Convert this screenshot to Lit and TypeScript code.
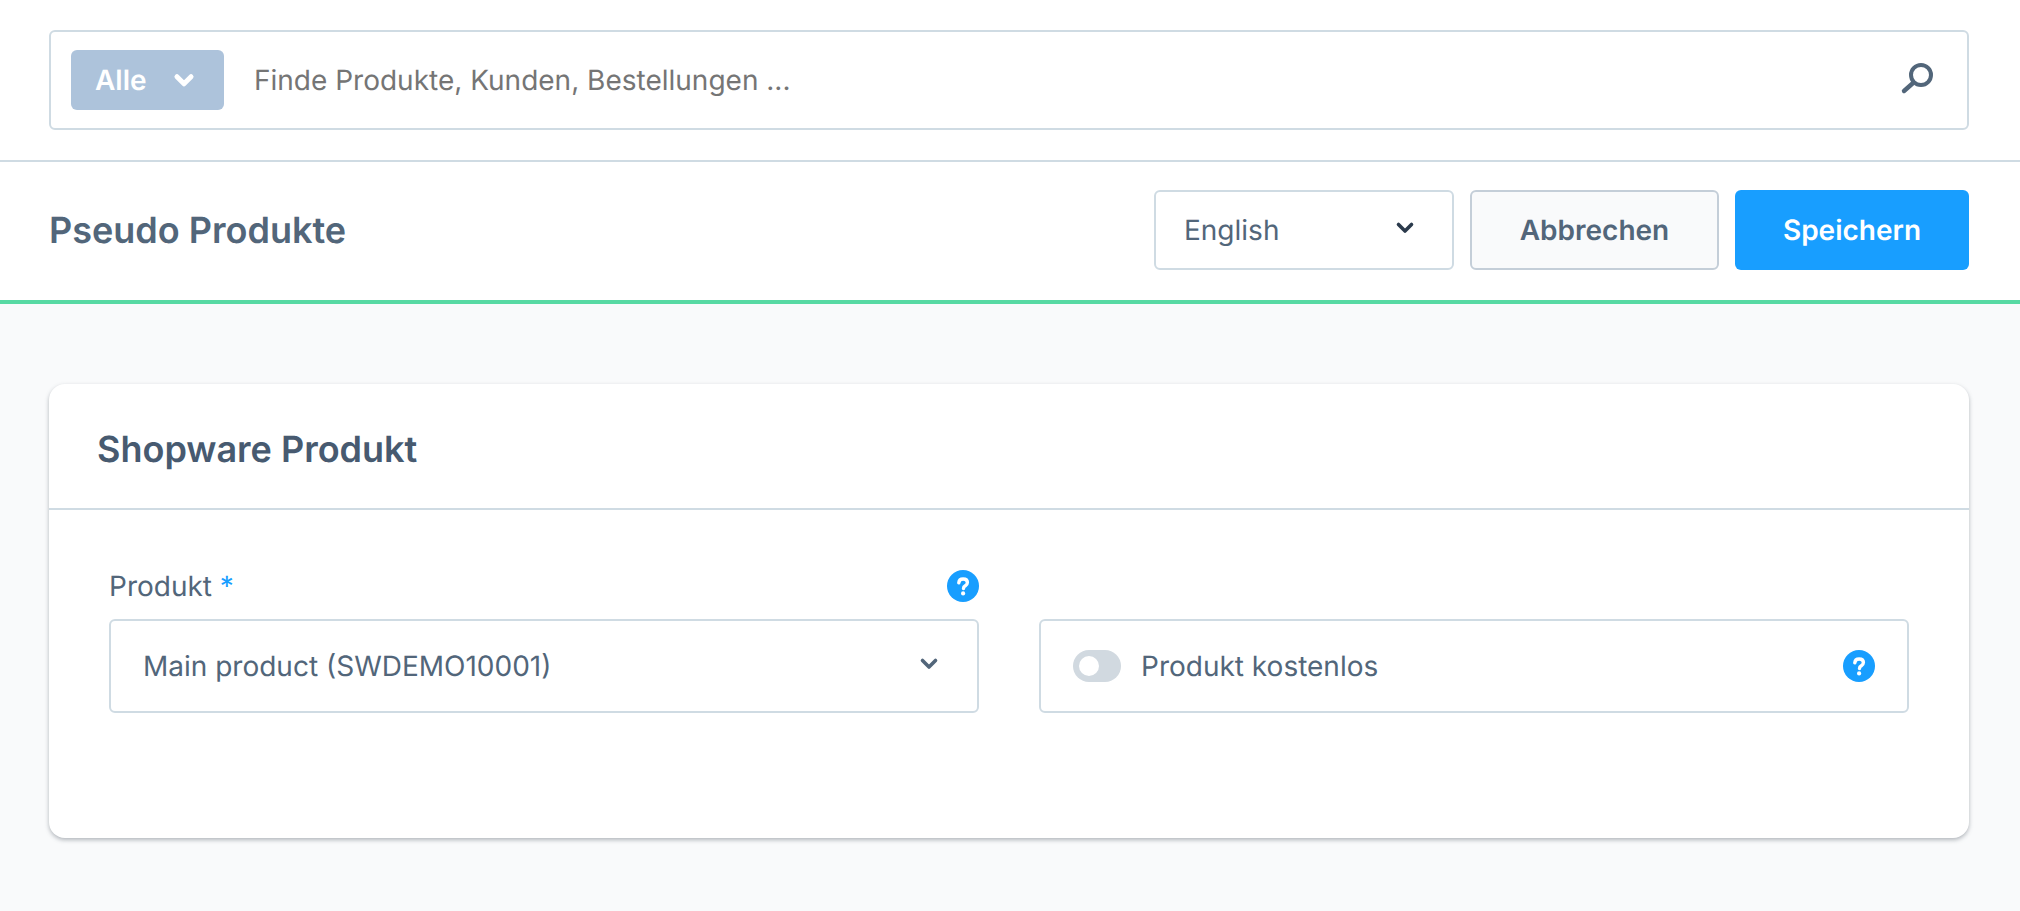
import { LitElement, html, css } from "lit";
import { customElement } from "lit/decorators.js";

const chevron = html`<svg viewBox="0 0 18 12" fill="none" stroke="currentColor" stroke-width="3.6" stroke-linecap="round" stroke-linejoin="round"><path d="M2.5 2.5 9 9l6.5-6.5"/></svg>`;
const help = html`<svg class="help" viewBox="0 0 32 32"><circle cx="16" cy="16" r="16" fill="#189eff"/><path d="M11.8 12.8c.2-2.4 1.9-3.8 4.3-3.8 2.6 0 4.3 1.4 4.3 3.5 0 1.6-.8 2.4-2.1 3.3-1.3.8-1.8 1.3-1.8 2.7" fill="none" stroke="#fff" stroke-width="3.4" stroke-linecap="round"/><circle cx="16.1" cy="23.4" r="2.1" fill="#fff"/></svg>`;

@customElement("app-root")
export class AppRoot extends LitElement {
  static styles = css`
    :host { display: block; min-height: 911px; background: #f9fafb; font-family: Inter, "Liberation Sans", sans-serif; font-size: 28px; color: #52667a; text-rendering: geometricPrecision; }
    svg { overflow: visible; }
    .top { background: #fff; padding: 30px 51px 30px 49px; border-bottom: 2px solid #cfdbe3; }
    .search { box-sizing: border-box; height: 100px; display: flex; align-items: center; border: 2px solid #cfdbe3; border-radius: 6px; padding: 0 33px 0 20px; background: #fff; }
    .pill { box-sizing: border-box; width: 153px; height: 60px; background: #adc3db; border-radius: 6px; color: #fff; font-weight: 600; display: flex; align-items: center; padding: 0 30px 0 24px; justify-content: space-between; flex: none; }
    .pill svg { width: 20px; height: 13px; stroke-width: 4.6; }
    .placeholder { flex: 1; margin-left: 30px; color: #757575; }
    .glass { width: 36px; height: 36px; color: #52667a; }
    .bar { background: #fff; box-sizing: border-box; height: 142px; border-bottom: 4px solid #57d9a3; padding: 0 51px 2px 49px; display: flex; align-items: center; }
    .bar h1 { flex: 1; margin: 0; font-size: 36px; font-weight: 600; color: #52667a; }
    .lang { box-sizing: border-box; width: 300px; height: 80px; border: 2px solid #cfdbe3; border-radius: 6px; background: #fff; display: flex; align-items: center; justify-content: space-between; padding: 0 38px 0 28px; }
    .lang svg { width: 18px; height: 12px; color: #2b3a4c; margin-top: -5px; }
    .btn { box-sizing: border-box; height: 80px; border-radius: 6px; font-weight: 600; display: flex; align-items: center; justify-content: center; }
    .cancel { width: 249px; margin-left: 16px; border: 2px solid #c4ced8; background: #f9fafb; color: #52667a; }
    .save { width: 234px; margin-left: 16px; background: #189eff; color: #fff; }
    .content { padding: 80px 51px 0 49px; }
    .card { background: #fff; border-radius: 16px; box-shadow: 0 2px 4px rgba(90, 100, 110, .45); height: 454px; }
    .card-head { box-sizing: border-box; height: 126px; border-bottom: 2px solid #cfdbe3; padding: 5px 48px 0; display: flex; align-items: center; }
    .card-head h2 { margin: 0; font-size: 36px; font-weight: 600; color: #475a70; }
    .grid { display: grid; grid-template-columns: 1fr 1fr; gap: 60px; padding: 60px 60px 0; align-items: end; }
    .label { display: flex; align-items: center; justify-content: space-between; height: 32px; margin-bottom: 17px; }
    .label b { color: #189eff; font-weight: 400; }
    .help { width: 32px; height: 32px; flex: none; display: block; }
    .box { box-sizing: border-box; height: 94px; border: 2px solid #cfdbe3; border-radius: 6px; display: flex; align-items: center; }
    .select { padding: 0 39px 0 32px; justify-content: space-between; }
    .select svg { width: 18px; height: 12px; margin-top: -5px; }
    .switch { padding: 0 32px 0 32px; }
    .toggle { width: 48px; height: 32px; border-radius: 16px; background: #d1d9e0; display: flex; align-items: center; padding-left: 6px; box-sizing: border-box; flex: none; }
    .knob { width: 20px; height: 20px; border-radius: 50%; background: #fff; }
    .switch span { flex: 1; margin-left: 20px; }
  `;

  render() {
    return html`
      <div class="top">
        <div class="search">
          <div class="pill">Alle ${chevron}</div>
          <div class="placeholder">Finde Produkte, Kunden, Bestellungen ...</div>
          <svg class="glass" viewBox="0 0 36 36" fill="none" stroke="currentColor" stroke-linecap="round"><circle cx="23" cy="13" r="10" stroke-width="4"/><path d="M14.5 21.5 6 29" stroke-width="4.4"/></svg>
        </div>
      </div>
      <div class="bar">
        <h1>Pseudo Produkte</h1>
        <div class="lang">English ${chevron}</div>
        <div class="btn cancel">Abbrechen</div>
        <div class="btn save">Speichern</div>
      </div>
      <div class="content">
        <div class="card">
          <div class="card-head"><h2>Shopware Produkt</h2></div>
          <div class="grid">
            <div>
              <div class="label"><span>Produkt <b>*</b></span>${help}</div>
              <div class="box select">Main product (SWDEMO10001) ${chevron}</div>
            </div>
            <div class="box switch">
              <div class="toggle"><div class="knob"></div></div>
              <span>Produkt kostenlos</span>
              ${help}
            </div>
          </div>
        </div>
      </div>
    `;
  }
}
